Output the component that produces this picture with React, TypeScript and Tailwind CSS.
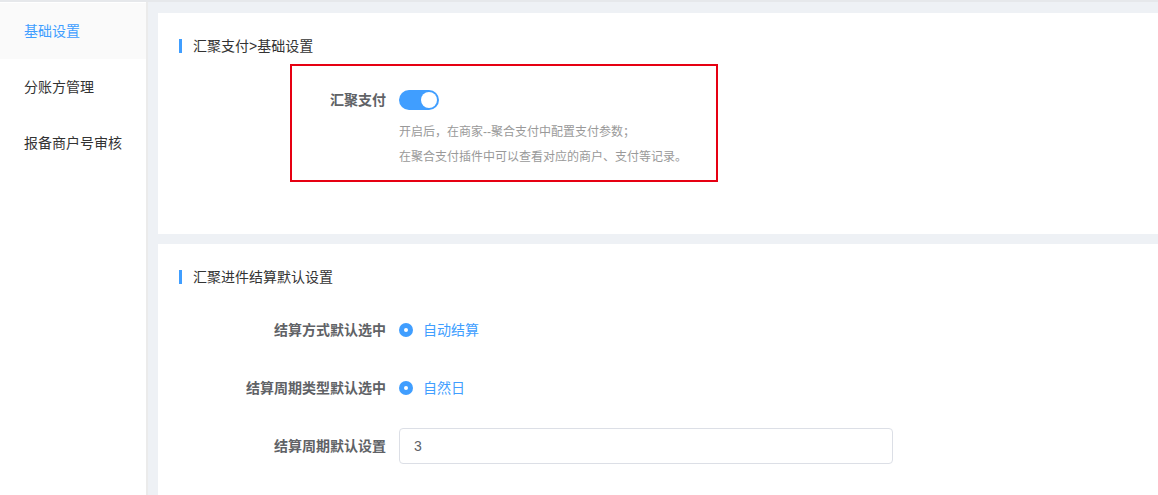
import { useState } from 'react'

const font = "font-['Liberation_Sans','Noto_Sans_CJK_SC',sans-serif]"

function SectionTitle({ text }: { text: string }) {
  return (
    <div className="flex items-center h-[14px]">
      <span className="w-[3px] h-[14px] bg-[#409eff] ml-px" />
      <span className="ml-[11px] text-sm text-[#333] leading-[14px]">{text}</span>
    </div>
  )
}

function Radio({ label }: { label: string }) {
  return (
    <div className="flex items-center">
      <span className="w-[14px] h-[14px] rounded-full bg-[#409eff] flex items-center justify-center">
        <span className="w-[4px] h-[4px] rounded-full bg-white" />
      </span>
      <span className="ml-[10px] text-sm text-[#409eff]">{label}</span>
    </div>
  )
}

export default function App() {
  const [on, setOn] = useState(true)
  const [days, setDays] = useState('3')
  const menu = ['基础设置', '分账方管理', '报备商户号审核']

  return (
    <div className={`${font} w-full h-[495px] overflow-hidden bg-[#eef1f5] border-t-2 border-[#e6e8eb] flex`}>
      <aside className="w-[148px] shrink-0 bg-white border-r-2 border-[#ebebeb] pt-px">
        {menu.map((m, i) => (
          <div
            key={m}
            className={`h-[56px] flex items-center pl-6 text-sm ${i === 0 ? 'bg-[#fafafa] text-[#409eff]' : 'text-[#333]'}`}
          >
            {m}
          </div>
        ))}
      </aside>

      <main className="flex-1 pl-[10px] pt-[11px] flex flex-col gap-[10px]">
        <section className="relative bg-white h-[221px] pl-5 pt-[26px]">
          <SectionTitle text="汇聚支付>基础设置" />
          <div className="mt-[37px] flex items-center h-5">
            <span className="w-[208px] text-right text-sm font-bold text-[#606266]">汇聚支付</span>
            <button
              onClick={() => setOn(!on)}
              className={`ml-[13px] w-10 h-5 rounded-full relative ${on ? 'bg-[#409eff]' : 'bg-[#dcdfe6]'}`}
            >
              <span className={`absolute top-[2px] w-4 h-4 rounded-full bg-white ${on ? 'right-[2px]' : 'left-[2px]'}`} />
            </button>
          </div>
          <div className="mt-[10px] ml-[221px] text-xs leading-[25px] text-[#999]">
            <p>开启后，在商家--聚合支付中配置支付参数；</p>
            <p>在聚合支付插件中可以查看对应的商户、支付等记录。</p>
          </div>
          <div className="absolute left-[132px] top-[51px] w-[428px] h-[118px] border-2 border-[#e60012] pointer-events-none" />
        </section>

        <section className="bg-white flex-1 pl-5 pt-[26px]">
          <SectionTitle text="汇聚进件结算默认设置" />
          <div className="mt-[28px] flex flex-col gap-[22px]">
            <div className="flex items-center h-9">
              <span className="w-[208px] text-right text-sm font-bold text-[#606266]">结算方式默认选中</span>
              <div className="ml-[13px]">
                <Radio label="自动结算" />
              </div>
            </div>
            <div className="flex items-center h-9">
              <span className="w-[208px] text-right text-sm font-bold text-[#606266]">结算周期类型默认选中</span>
              <div className="ml-[13px]">
                <Radio label="自然日" />
              </div>
            </div>
            <div className="flex items-center h-9">
              <span className="w-[208px] text-right text-sm font-bold text-[#606266]">结算周期默认设置</span>
              <input
                value={days}
                onChange={(e) => setDays(e.target.value)}
                className="ml-[13px] w-[494px] h-9 px-[14px] border border-[#dcdfe6] rounded text-sm text-[#606266] outline-none"
              />
            </div>
          </div>
        </section>
      </main>
    </div>
  )
}
